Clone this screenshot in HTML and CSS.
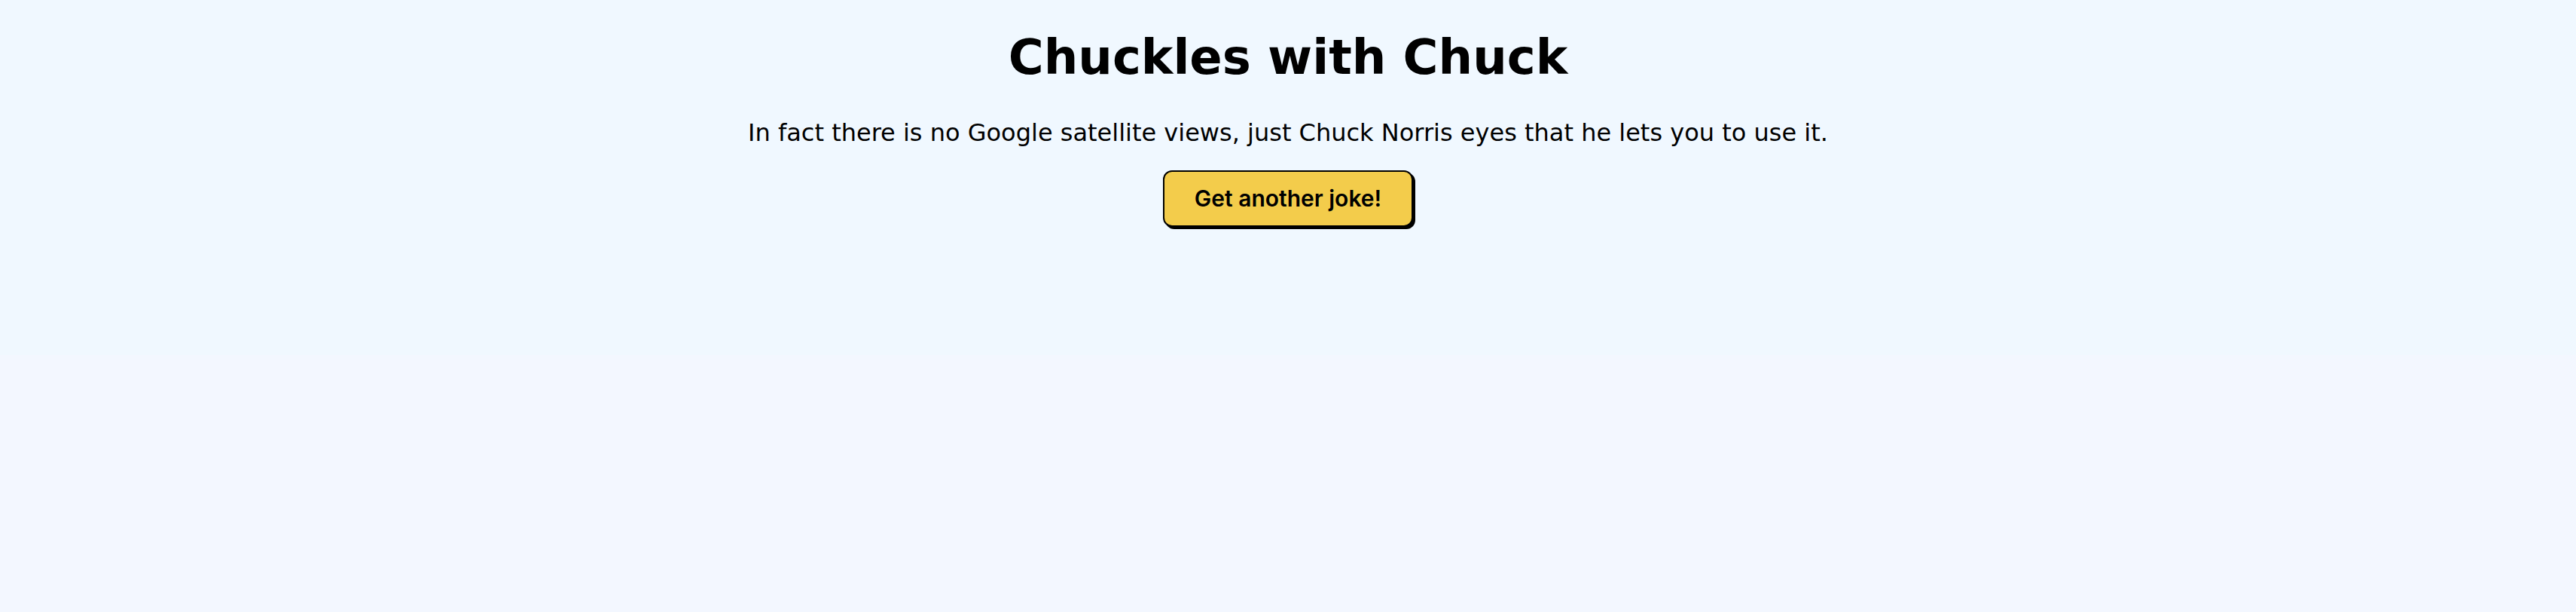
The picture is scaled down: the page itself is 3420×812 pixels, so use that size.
FILE: index.html
```html
<!DOCTYPE html>
<html lang="en">
<head>
<meta charset="utf-8">
<title>Chuckles with Chuck</title>
<link rel="stylesheet" href="styles.css">
</head>
<body>
<main class="page">
<h1 class="title">Chuckles with Chuck</h1>
<p class="joke">In fact there is no Google satellite views, just Chuck Norris eyes that he lets you to use it.</p>
<button class="joke-button" type="button">Get another joke!</button>
</main>
</body>
</html>
```

FILE: styles.css
```css
body {
  margin: 0;
  min-height: 100vh;
  background: #f0f8ff;
  color: #000;
  font-family: Verdana, "DejaVu Sans", sans-serif;
}

.page {
  box-sizing: border-box;
  display: flex;
  flex-direction: column;
  align-items: center;
  min-height: 100vh;
  padding-top: 36px;
  background: linear-gradient(#f0f8ff 58%, #f3f7ff 58%);
  text-align: center;
}

.title {
  margin: 0;
  font-size: 64px;
  line-height: 80px;
}

.joke {
  margin: 40px 0 30px;
  font-size: 32px;
  line-height: 40px;
}

.joke-button {
  padding: 16px 40px;
  border: 2px solid #000;
  border-radius: 12px;
  background: #f3cc4b;
  box-shadow: 3px 3px 0 #000;
  color: #000;
  font-family: Inter, sans-serif;
  font-size: 30px;
  font-weight: 600;
  line-height: 39px;
}
```
